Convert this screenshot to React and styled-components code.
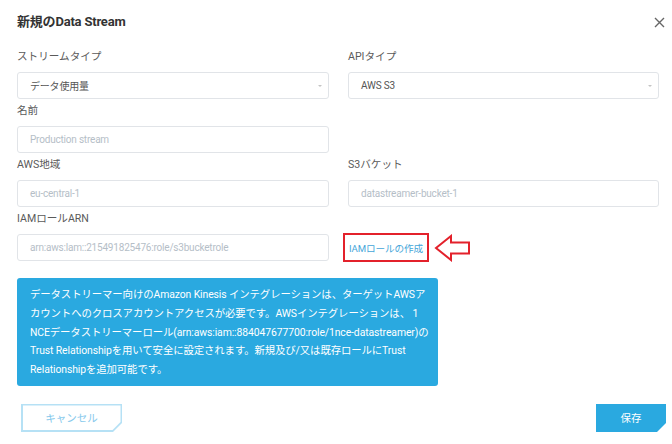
import React from "react";
import styled, { createGlobalStyle } from "styled-components";

const GlobalStyle = createGlobalStyle`
  html, body {
    margin: 0;
    padding: 0;
    background: #ffffff;
  }
  body {
    font-family: Roboto, "Noto Sans CJK JP", sans-serif;
    color: #444;
  }
  * {
    box-sizing: border-box;
  }
`;

const Modal = styled.div`
  width: 672px;
  height: 444px;
  padding: 12px 13px 0 17px;
  background: #fff;
  overflow: hidden;
`;

const Header = styled.div`
  display: flex;
  align-items: center;
  justify-content: space-between;
  height: 20px;
  margin-bottom: 17px;
`;

const Title = styled.h1`
  margin: 0;
  font-size: 13px;
  font-weight: 700;
  color: #333;
  line-height: 20px;
  letter-spacing: -0.2px;
`;

const CloseButton = styled.button`
  border: 0;
  background: none;
  padding: 0;
  margin-right: -7px;
  width: 14px;
  height: 14px;
  display: flex;
  align-items: center;
  justify-content: center;
  cursor: pointer;
`;

const Grid = styled.div`
  display: grid;
  grid-template-columns: 312px 311px;
  column-gap: 19px;
  row-gap: 4px;
`;

const Field = styled.div`
  display: flex;
  flex-direction: column;
`;

const Label = styled.label`
  font-size: 10.6px;
  line-height: 16px;
  color: #5a5a5a;
  margin-bottom: 7px;
`;

const Box = styled.div`
  height: 27px;
  border: 1px solid #e1e4e8;
  border-radius: 3px;
  display: flex;
  align-items: center;
  justify-content: space-between;
  padding: 0 6px 0 12px;
  font-size: 10px;
  letter-spacing: -0.2px;
  color: ${(p) => (p.$placeholder ? "#b5bec7" : "#555")};
  background: #fff;
`;

const Caret = styled.span`
  width: 0;
  height: 0;
  border-left: 2.5px solid transparent;
  border-right: 2.5px solid transparent;
  border-top: 2.5px solid #c4c4c4;
`;

const LinkCell = styled.div`
  display: flex;
  align-items: center;
  align-self: end;
  height: 29px;
  margin-left: -5px;
  margin-bottom: -1px;
`;

const Highlight = styled.div`
  height: 29px;
  border: 2px solid #e3212b;
  display: flex;
  align-items: center;
  padding: 0 4px;
`;

const RoleLink = styled.a`
  font-size: 9.6px;
  letter-spacing: -0.1px;
  color: #45a6d9;
  text-decoration: none;
  white-space: nowrap;
`;

const Info = styled.div`
  width: 421px;
  margin-top: 17px;
  background: #2aa9e0;
  border-radius: 3px;
  padding: 8px 0 6px 13px;
  color: #fff;
  font-size: 10.4px;
  letter-spacing: -0.1px;
  line-height: 18.8px;
  white-space: nowrap;
`;

const Footer = styled.div`
  display: flex;
  justify-content: space-between;
  align-items: center;
  margin-top: 18px;
  padding-left: 4px;
  margin-right: -7px;
`;

const cut = "polygon(0 0, 100% 0, 100% calc(100% - 9px), calc(100% - 9px) 100%, 0 100%)";

const CancelFrame = styled.div`
  width: 101px;
  height: 28px;
  padding: 1.5px;
  background: #b6e1f5;
  clip-path: ${cut};
`;

const CancelButton = styled.button`
  width: 100%;
  height: 100%;
  border: 0;
  background: #fff;
  clip-path: polygon(0 0, 100% 0, 100% calc(100% - 8.4px), calc(100% - 8.4px) 100%, 0 100%);
  font-family: inherit;
  font-size: 10.5px;
  color: #86c9ec;
  cursor: pointer;
`;

const SaveButton = styled.button`
  width: 70px;
  height: 28px;
  border: 0;
  background: #2aa9e0;
  clip-path: ${cut};
  font-family: inherit;
  font-size: 10.5px;
  color: #fff;
  cursor: pointer;
`;

const Arrow = () => (
  <svg width="38" height="28" viewBox="0 0 38 28" style={{ marginLeft: 5 }}>
    <path
      d="M2 14 L17 2 L17 8.5 L35 8.5 L35 19.5 L17 19.5 L17 26 Z"
      fill="#fff"
      stroke="#e3212b"
      strokeWidth="2"
      strokeLinejoin="miter"
    />
  </svg>
);

const CloseIcon = () => (
  <svg width="11" height="11" viewBox="0 0 11 11">
    <path d="M1 1 L10 10 M10 1 L1 10" stroke="#666" strokeWidth="1.4" />
  </svg>
);

export default function App() {
  return (
    <>
      <GlobalStyle />
      <Modal>
        <Header>
          <Title>新規のData Stream</Title>
          <CloseButton aria-label="close">
            <CloseIcon />
          </CloseButton>
        </Header>

        <Grid>
          <Field>
            <Label>ストリームタイプ</Label>
            <Box>
              データ使用量
              <Caret />
            </Box>
          </Field>
          <Field>
            <Label>APIタイプ</Label>
            <Box>
              AWS S3
              <Caret />
            </Box>
          </Field>

          <Field>
            <Label>名前</Label>
            <Box $placeholder>Production stream</Box>
          </Field>
          <div />

          <Field>
            <Label>AWS地域</Label>
            <Box $placeholder>eu-central-1</Box>
          </Field>
          <Field>
            <Label>S3バケット</Label>
            <Box $placeholder>datastreamer-bucket-1</Box>
          </Field>

          <Field>
            <Label>IAMロールARN</Label>
            <Box $placeholder>arn:aws:lam::215491825476:role/s3bucketrole</Box>
          </Field>
          <LinkCell>
            <Highlight>
              <RoleLink href="#">IAMロールの作成</RoleLink>
            </Highlight>
            <Arrow />
          </LinkCell>
        </Grid>

        <Info>
          データストリーマー向けのAmazon Kinesis インテグレーションは、ターゲットAWSア
          <br />
          カウントへのクロスアカウントアクセスが必要です。AWSインテグレーションは、 1
          <br />
          NCEデータストリーマーロール(arn:aws:iam::884047677700:role/1nce-datastreamer)の
          <br />
          Trust Relationshipを用いて安全に設定されます。新規及び/又は既存ロールにTrust
          <br />
          Relationshipを追加可能です。
        </Info>

        <Footer>
          <CancelFrame>
            <CancelButton>キャンセル</CancelButton>
          </CancelFrame>
          <SaveButton>保存</SaveButton>
        </Footer>
      </Modal>
    </>
  );
}
